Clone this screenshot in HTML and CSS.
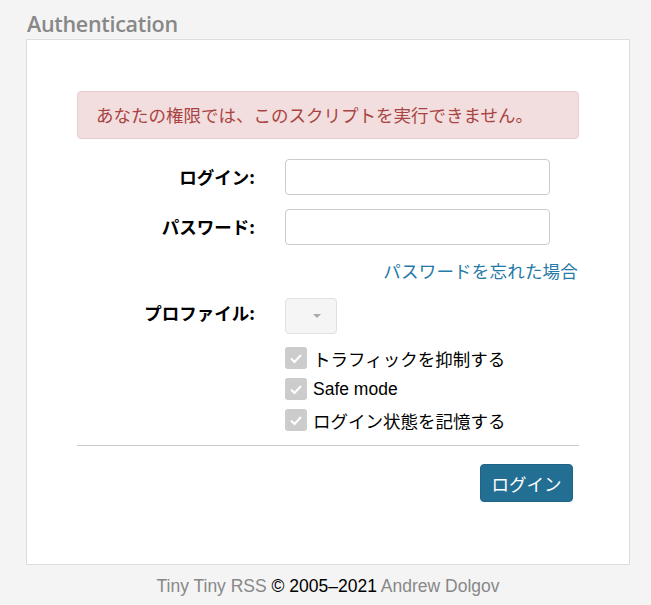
FILE: index.html
```html
<!DOCTYPE html>
<html lang="ja">
<head>
    <meta charset="UTF-8">
    <meta name="viewport" content="width=device-width, initial-scale=1.0">
    <title>Tiny Tiny RSS : Login</title>
    <link rel="stylesheet" href="styles.css">
</head>
<body>
    <div class="login-wrap">
        <h1 class="login-title">Authentication</h1>

        <div class="login-panel">
            <div class="alert-error">あなたの権限では、このスクリプトを実行できません。</div>

            <form class="login-form" onsubmit="return false">
                <div class="form-row">
                    <label for="login">ログイン:</label>
                    <input type="text" id="login" class="text-input">
                </div>
                <div class="form-row">
                    <label for="password">パスワード:</label>
                    <input type="password" id="password" class="text-input">
                </div>
                <div class="forgot-row">
                    <a href="#" class="forgot-link">パスワードを忘れた場合</a>
                </div>
                <div class="form-row profile-row">
                    <label>プロファイル:</label>
                    <div class="select-box"><span class="caret"></span></div>
                </div>

                <div class="check-list">
                    <div class="check-row">
                        <span class="check-box"><svg viewBox="0 0 22 22" width="22" height="22"><path d="M6 11.5l3.5 3.5 6.5-7" fill="none" stroke="#fff" stroke-width="2"/></svg></span>
                        <span class="check-label">トラフィックを抑制する</span>
                    </div>
                    <div class="check-row">
                        <span class="check-box"><svg viewBox="0 0 22 22" width="22" height="22"><path d="M6 11.5l3.5 3.5 6.5-7" fill="none" stroke="#fff" stroke-width="2"/></svg></span>
                        <span class="check-label latin">Safe mode</span>
                    </div>
                    <div class="check-row">
                        <span class="check-box"><svg viewBox="0 0 22 22" width="22" height="22"><path d="M6 11.5l3.5 3.5 6.5-7" fill="none" stroke="#fff" stroke-width="2"/></svg></span>
                        <span class="check-label">ログイン状態を記憶する</span>
                    </div>
                </div>

                <hr class="divider">

                <div class="button-row">
                    <button class="login-btn" type="submit">ログイン</button>
                </div>
            </form>
        </div>

        <div class="footer">
            <a href="#">Tiny Tiny RSS</a> © 2005–2021 <a href="#">Andrew Dolgov</a>
        </div>
    </div>
</body>
</html>
```

FILE: styles.css
```css
body {
    margin: 0;
    padding: 0;
    background-color: #f4f4f4;
    font-family: "Liberation Sans", "Noto Sans CJK JP", sans-serif;
    font-size: 17.5px;
    color: #000;
}
.login-wrap {
    width: 604px;
    margin-left: 26px;
}
.login-title {
    margin: 0;
    padding: 11px 0 2px 1px;
    font-family: "Open Sans", "Noto Sans", sans-serif;
    font-size: 21.5px;
    font-weight: 600;
    line-height: 26px;
    color: #888;
    letter-spacing: -0.3px;
}
.login-panel {
    background: white;
    border: 1px solid #ddd;
    padding: 51px 50px 62px 50px;
}
.alert-error {
    background: #f2dede;
    border: 1px solid #ebccd1;
    border-radius: 4px;
    color: #a94442;
    font-family: "Noto Sans CJK JP", sans-serif;
    font-size: 17.5px;
    line-height: 24px;
    padding: 11px 18px;
}
.login-form {
    margin-top: 20px;
}
.form-row {
    display: grid;
    grid-template-columns: 178px 265px;
    column-gap: 30px;
    align-items: center;
    margin-bottom: 14px;
}
.form-row label {
    text-align: right;
    font-family: "Noto Sans CJK JP", sans-serif;
    font-weight: bold;
    font-size: 17.5px;
    line-height: 24px;
}
.text-input {
    box-sizing: border-box;
    height: 36px;
    width: 265px;
    border: 1px solid #ccc;
    border-radius: 4px;
    background: white;
    padding: 6px 10px;
    font-size: 16px;
}
.forgot-row {
    text-align: right;
    line-height: 24px;
    margin-bottom: 14px;
    padding-right: 1px;
}
.forgot-link {
    color: #257aa7;
    text-decoration: none;
    font-family: "Noto Sans CJK JP", sans-serif;
    font-size: 17.5px;
    letter-spacing: 0.2px;
}
.profile-row {
    margin-bottom: 13px;
}
.profile-row label {
    margin-bottom: 6px;
}
.select-box {
    box-sizing: border-box;
    width: 52px;
    height: 36px;
    background: #f5f5f5;
    border: 1px solid #e0e0e0;
    border-radius: 4px;
    display: flex;
    align-items: center;
    justify-content: center;
}
.caret {
    width: 0;
    height: 0;
    border-left: 4px solid transparent;
    border-right: 4px solid transparent;
    border-top: 4px solid #aaa;
    margin-left: 12px;
}
.check-list {
    margin-left: 208px;
}
.check-row {
    display: flex;
    align-items: center;
    height: 22px;
    margin-bottom: 9px;
}
.check-row:last-child {
    margin-bottom: 0;
}
.check-box {
    width: 22px;
    height: 22px;
    background: #ccc;
    border-radius: 3px;
    margin-right: 6px;
    display: flex;
}
.check-label {
    font-family: "Noto Sans CJK JP", sans-serif;
    font-size: 17.5px;
}
.check-label.latin {
    font-family: "Liberation Sans", sans-serif;
}
.divider {
    border: none;
    border-top: 1px solid #ccc;
    margin: 14px 0 18px 0;
}
.button-row {
    text-align: right;
    padding-right: 6px;
}
.login-btn {
    background: #236f94;
    color: white;
    border: 1px solid #1f6386;
    border-radius: 4px;
    height: 38px;
    width: 93px;
    font-family: "Noto Sans CJK JP", sans-serif;
    font-size: 17.5px;
    cursor: pointer;
}
.footer {
    text-align: center;
    padding-top: 10px;
    line-height: 22px;
    font-size: 17.5px;
}
.footer a {
    color: #888;
    text-decoration: none;
}
```
